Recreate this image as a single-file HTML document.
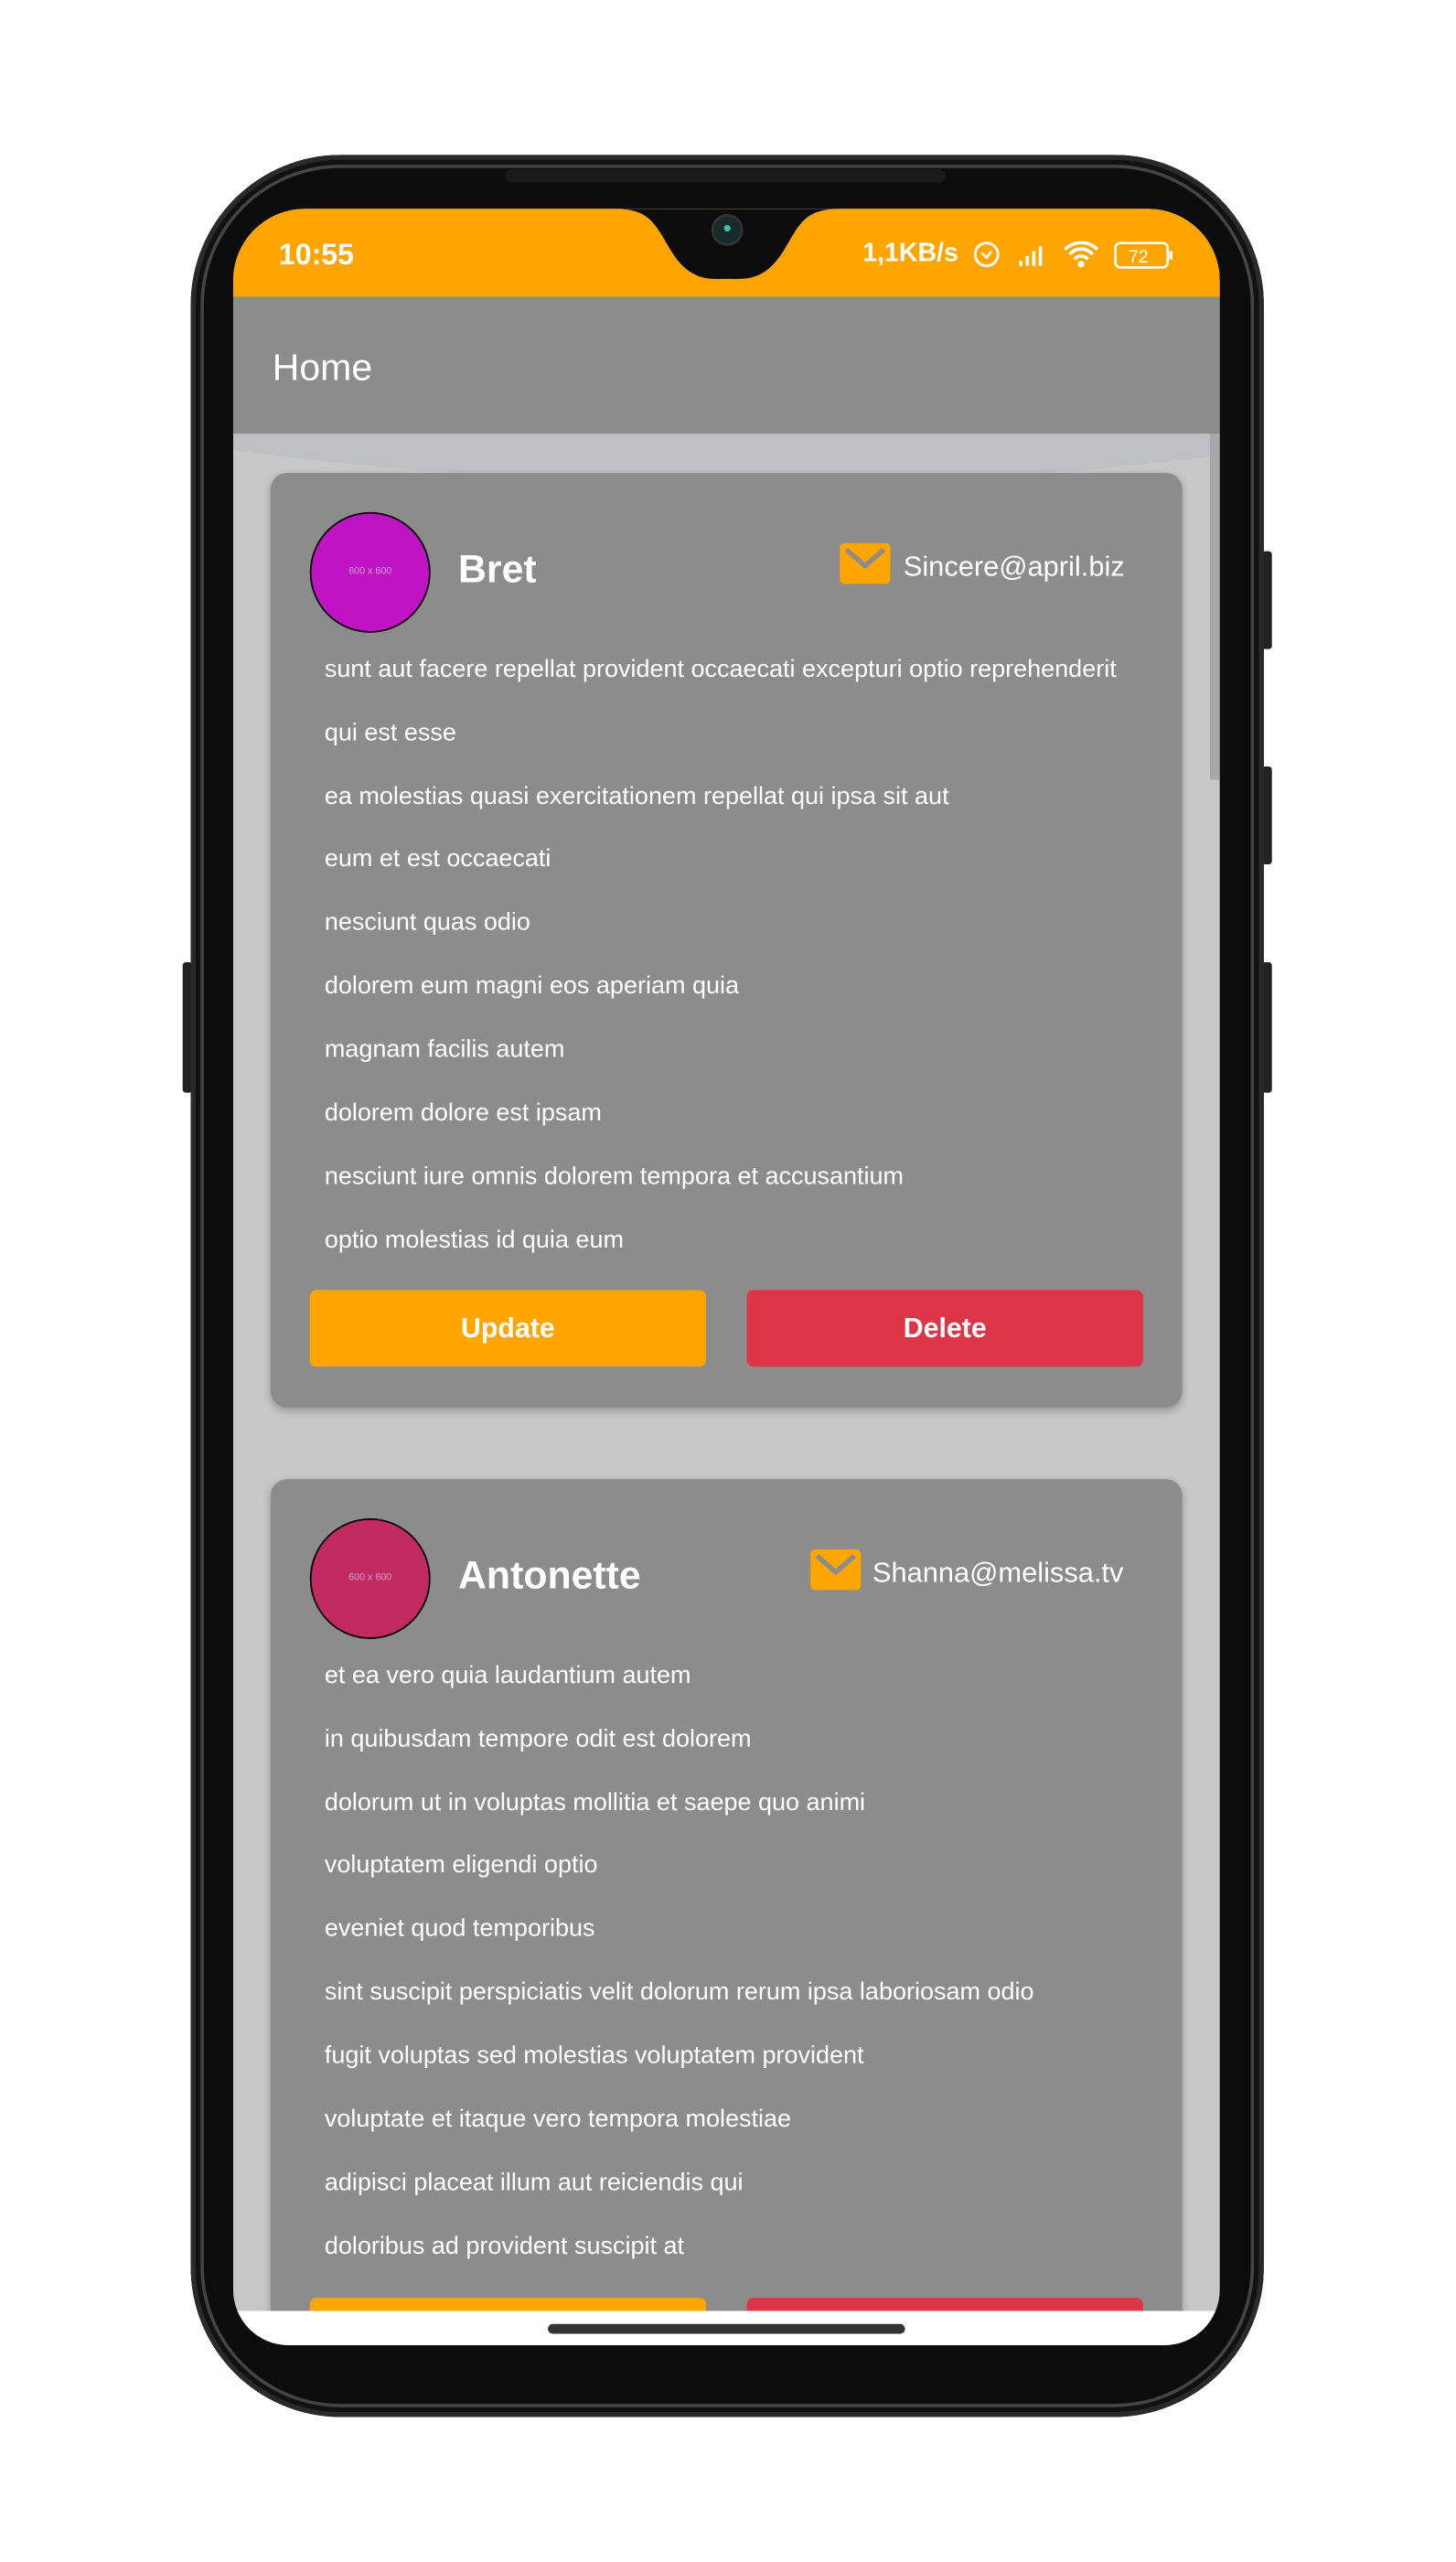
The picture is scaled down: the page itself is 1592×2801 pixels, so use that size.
<!DOCTYPE html>
<html><head><meta charset="utf-8"><style>
html,body{margin:0;padding:0;background:#fff;width:1592px;height:2800px;overflow:hidden}
#w{position:absolute;left:0;top:0;width:893px;height:1571px;transform:scale(1.783);transform-origin:0 0;font-family:"Liberation Sans",Arial,sans-serif}
.abs{position:absolute}
.phone{left:117px;top:95px;width:658px;height:1387px;border-radius:92px;background:#0c0c0c;box-shadow:inset 0 0 0 3px #2a2a2a,inset 0 0 0 6px #111,inset 0 0 0 8px #444}
.screen{left:143px;top:128px;width:605px;height:1310px;border-radius:44px 44px 34px 34px;overflow:hidden;background:#c8c8c8}
.card{left:23px;width:559px;background:#8c8c8c;border-radius:10px;box-shadow:0 2px 5px rgba(0,0,0,.25)}
.av{left:24px;top:24px;width:72px;height:72px;border-radius:50%;border:1.5px solid #000;color:#d8a0d8;font-size:6px;display:flex;align-items:center;justify-content:center}
.name{left:115px;font-weight:bold;font-size:24px;color:#fff}
.mail{width:31px;height:25px;background:#ffa500;border-radius:3px}
.em{font-size:17.3px;color:#fff}
.ln{left:33px;font-size:15.15px;color:#fff;white-space:nowrap}
.btn{height:47px;width:243px;border-radius:4px;color:#fff;font-weight:bold;font-size:17px;display:flex;align-items:center;justify-content:center}
.side{background:#222;border-radius:2px}
</style></head><body><div id="w">
<div class="abs side" style="left:112px;top:590px;width:6px;height:80px"></div>
<div class="abs side" style="left:774px;top:338px;width:6px;height:60px"></div>
<div class="abs side" style="left:774px;top:470px;width:6px;height:60px"></div>
<div class="abs side" style="left:774px;top:590px;width:6px;height:80px"></div>
<div class="abs phone"></div>
<div class="abs" style="left:310px;top:104px;width:270px;height:8px;border-radius:4px;background:#1a1a1a"></div>
<div class="abs screen">
  <div class="abs" style="left:0;top:0;width:605px;height:54px;background:#ffa500"></div>
  <svg class="abs" style="left:0;top:0" width="605" height="60"><path d="M233 0 C255 0 258 8 268 25 C280 45 292 43 303 43 C314 43 326 45 338 25 C348 8 351 0 373 0 Z" fill="#0c0c0c"/><circle cx="303" cy="13" r="9" fill="#1a2a2a" stroke="#333" stroke-width="1.5"/><circle cx="303" cy="12" r="2" fill="#3fc0a0"/></svg>
  <div class="abs" style="left:28px;top:18px;color:#fff;font-size:18px;font-weight:bold">10:55</div>
  <div class="abs" style="left:386px;top:19px;color:#fff;font-size:16px;font-weight:bold">1,1KB/s</div>
  <svg class="abs" style="left:452px;top:17px" width="130" height="22"><circle cx="10" cy="11" r="7" fill="none" stroke="#fff" stroke-width="1.6"/><path d="M7 10l3 3 3-4" stroke="#fff" fill="none" stroke-width="1.4"/><path d="M30 18h2v-3h-2zM34 18h2v-6h-2zM38 18h2v-9h-2zM42 18h2v-12h-2z" fill="#fff"/><path d="M58 8a14 14 0 0 1 20 0M61 11a9 9 0 0 1 14 0M64 14a5 5 0 0 1 8 0" stroke="#fff" stroke-width="2" fill="none"/><circle cx="68" cy="17" r="2" fill="#fff"/><rect x="89" y="4" width="32" height="15" rx="3" fill="none" stroke="#fff" stroke-width="1.5"/><rect x="122" y="9" width="2" height="5" fill="#fff"/><text x="97" y="16" font-size="11" fill="#fff" font-family="Liberation Sans">72</text></svg>
  <div class="abs" style="left:0;top:54px;width:605px;height:84px;background:#8c8c8c"></div>
  <div class="abs" style="left:24px;top:84px;color:#fff;font-size:23px">Home</div>
  <svg class="abs" style="left:0;top:138px" width="605" height="32"><path d="M0 0H599V14Q450 32 300 30Q150 30 0 10Z" fill="#bec1c4"/></svg>
  <div class="abs" style="left:599px;top:138px;width:6px;height:212px;background:#a8a8a8"></div>

  <div class="abs card" style="top:162px;height:573px">
    <div class="abs av" style="background:#c014c4">600 x 600</div>
    <div class="abs name" style="top:46px">Bret</div>
    <div class="abs mail" style="left:349px;top:43px"><svg width="31" height="25"><path d="M4 4L15.5 14L27 4" stroke="#8c8c8c" stroke-width="3" fill="none"/></svg></div>
    <div class="abs em" style="left:388px;top:47px">Sincere@april.biz</div>
    <div class="abs ln" style="top:112px">sunt aut facere repellat provident occaecati excepturi optio reprehenderit</div>
    <div class="abs ln" style="top:151px">qui est esse</div>
    <div class="abs ln" style="top:190px">ea molestias quasi exercitationem repellat qui ipsa sit aut</div>
    <div class="abs ln" style="top:228px">eum et est occaecati</div>
    <div class="abs ln" style="top:267px">nesciunt quas odio</div>
    <div class="abs ln" style="top:306px">dolorem eum magni eos aperiam quia</div>
    <div class="abs ln" style="top:345px">magnam facilis autem</div>
    <div class="abs ln" style="top:384px">dolorem dolore est ipsam</div>
    <div class="abs ln" style="top:423px">nesciunt iure omnis dolorem tempora et accusantium</div>
    <div class="abs ln" style="top:462px">optio molestias id quia eum</div>
    <div class="abs btn" style="left:24px;top:501px;background:#ffa500">Update</div>
    <div class="abs btn" style="left:292px;top:501px;background:#dc3545">Delete</div>
  </div>

  <div class="abs card" style="top:779px;height:600px">
    <div class="abs av" style="background:#c02a60">600 x 600</div>
    <div class="abs name" style="top:46px">Antonette</div>
    <div class="abs mail" style="left:331px;top:43px"><svg width="31" height="25"><path d="M4 4L15.5 14L27 4" stroke="#8c8c8c" stroke-width="3" fill="none"/></svg></div>
    <div class="abs em" style="left:369px;top:47px">Shanna@melissa.tv</div>
    <div class="abs ln" style="top:112px">et ea vero quia laudantium autem</div>
    <div class="abs ln" style="top:151px">in quibusdam tempore odit est dolorem</div>
    <div class="abs ln" style="top:190px">dolorum ut in voluptas mollitia et saepe quo animi</div>
    <div class="abs ln" style="top:228px">voluptatem eligendi optio</div>
    <div class="abs ln" style="top:267px">eveniet quod temporibus</div>
    <div class="abs ln" style="top:306px">sint suscipit perspiciatis velit dolorum rerum ipsa laboriosam odio</div>
    <div class="abs ln" style="top:345px">fugit voluptas sed molestias voluptatem provident</div>
    <div class="abs ln" style="top:384px">voluptate et itaque vero tempora molestiae</div>
    <div class="abs ln" style="top:423px">adipisci placeat illum aut reiciendis qui</div>
    <div class="abs ln" style="top:462px">doloribus ad provident suscipit at</div>
    <div class="abs btn" style="left:24px;top:502px;background:#ffa500"></div>
    <div class="abs btn" style="left:292px;top:502px;background:#dc3545"></div>
  </div>
  <div class="abs" style="left:0;top:1289px;width:605px;height:30px;background:#fff"></div>
  <div class="abs" style="left:193px;top:1297px;width:219px;height:6px;border-radius:3px;background:#333"></div>
</div>
</div></body></html>
